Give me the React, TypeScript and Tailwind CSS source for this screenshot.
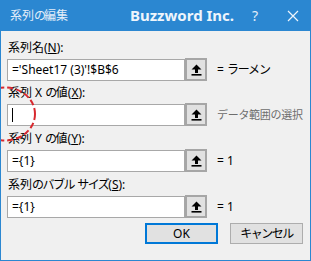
import React from "react";

const font = { fontFamily: '"Noto Sans", "Noto Sans CJK JP", sans-serif' };

function RefIcon() {
  return (
    <svg width="11" height="12" viewBox="0 0 11 12">
      <polygon points="5.5,0.5 10.5,5.5 7,5.5 7,9 4,9 4,5.5 0.5,5.5" fill="#000" />
      <rect x="0.5" y="10" width="10" height="1.6" fill="#000" />
    </svg>
  );
}

function Field({
  label,
  value,
  right,
  rightGray,
  caret,
  mb,
}: {
  label: React.ReactNode;
  value?: string;
  right: React.ReactNode;
  rightGray?: boolean;
  caret?: boolean;
  mb: string;
}) {
  return (
    <div className={`flex flex-col ${mb}`}>
      <div className="h-[16px] leading-[16px] text-[12px] text-[#000] mb-[3px] pl-[1px] whitespace-pre">{label}</div>
      <div className="flex items-center">
        <div className="w-[178px] h-[22px] bg-white border border-[#a8a8a8] flex items-center pl-[4px] text-[12px] text-black whitespace-nowrap">
          {caret ? <div className="w-[1px] h-[14px] bg-black" /> : value}
        </div>
        <div className="w-[22px] h-[23px] -mt-[1px] border-2 border-[#a6a6a6] bg-[#e1e1e1] flex items-center justify-center shrink-0">
          <RefIcon />
        </div>
        <div className={`ml-[10px] text-[12px] whitespace-nowrap ${rightGray ? "text-[#6d6d6d]" : "text-black"}`}>{right}</div>
      </div>
    </div>
  );
}

export default function App() {
  return (
    <div style={font} className="w-[311px] h-[261px] relative overflow-hidden bg-[#f0f0f0] border-x border-b border-[#2b87d1] flex flex-col">
      <div className="h-[31px] bg-[#2b87d1] flex items-center shrink-0 -mx-[1px]">
        <div className="pl-[10px] text-[12px] text-[#e3eef9] w-[130px]">
          系列<span className="tracking-[-2px]">の</span>編集
        </div>
        <div className="text-[15px] font-bold text-[#eef5fc] tracking-[0px]">Buzzword Inc.</div>
        <div className="ml-[18px] text-[14px] text-[#e3eef9]">?</div>
        <div className="ml-[29px] text-[#eef5fc]">
          <svg width="12" height="12" viewBox="0 0 12 12">
            <path d="M1 1 L11 11 M11 1 L1 11" stroke="#eef5fc" strokeWidth="1.2" />
          </svg>
        </div>
      </div>
      <div className="flex flex-col pl-[6px] pt-[9px]">
        <Field
          mb="mb-[4px]"
          label={<span>系列名(<span className="underline">N</span>):</span>}
          value="='Sheet17 (3)'!$B$6"
          right={<span>= <span className="tracking-[-1.2px]">ラーメン</span></span>}
        />
        <Field
          mb="mb-[5px]"
          label={<span>系列 X <span className="tracking-[-1.5px]">の</span>値(<span className="underline">X</span>):</span>}
          caret
          right={<span className="text-[11px] tracking-[-0.3px]">データ範囲の選択</span>}
          rightGray
        />
        <Field
          mb="mb-[5px]"
          label={<span>系列 Y <span className="tracking-[-1.5px]">の</span>値(<span className="underline">Y</span>):</span>}
          value="={1}"
          right="= 1"
        />
        <Field
          mb="mb-[5px]"
          label={
            <span>
              系列<span className="tracking-[-1.5px]">のバブル</span> <span className="tracking-[-1.5px]">サイズ</span>(<span className="underline">S</span>):
            </span>
          }
          value="={1}"
          right="= 1"
        />
        <div className="flex justify-end pr-[7px] gap-[12px]">
          <button className="w-[73px] h-[21px] border-2 border-[#0078d7] bg-[#e1e1e1] text-[12px] text-black flex items-center justify-center">
            OK
          </button>
          <button className="w-[73px] h-[21px] border border-[#adadad] bg-[#e1e1e1] text-[12px] text-black flex items-center justify-center tracking-[-1.5px]">
            キャンセル
          </button>
        </div>
      </div>
      <svg className="absolute left-0 top-[80px] pointer-events-none" width="40" height="70" viewBox="0 0 40 70">
        <ellipse cx="4" cy="34" rx="30" ry="26.5" fill="none" stroke="#d8292f" strokeWidth="2" strokeDasharray="6 3" />
      </svg>
    </div>
  );
}
